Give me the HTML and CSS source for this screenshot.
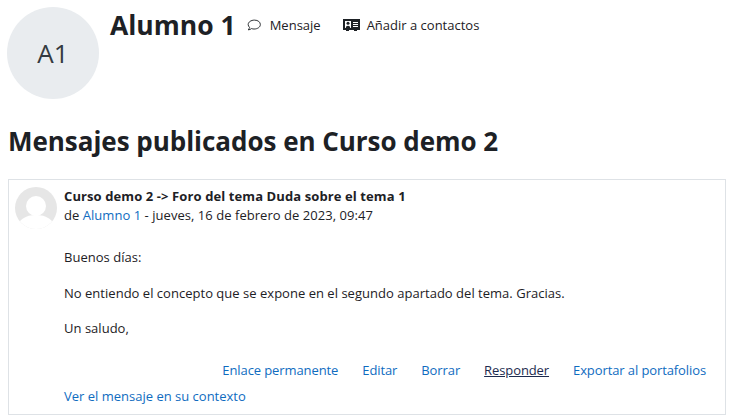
FILE: index.html
```html
<!DOCTYPE html>
<html lang="es">
<head>
<meta charset="utf-8">
<title>Mensajes publicados</title>
<link rel="stylesheet" href="styles.css">
</head>
<body>
<header class="profile">
  <div class="avatar">A1</div>
  <h1 class="name">Alumno 1</h1>
  <a class="action action-msg">
    <svg class="icon" viewBox="0 0 16 14" width="15" height="13"><path d="M8 1.2C4.2 1.2 1.2 3.3 1.2 6c0 1.200.6 2.200 1.500 3-.2.9-.8 1.800-1.400 2.700 1.300-.1 2.600-.6 3.500-1.400 1 .4 1.900.5 2.700.5 3.800 0 6.800-2.100 6.800-4.800S11.800 1.200 8 1.200z" fill="none" stroke="#1d2125" stroke-width="1"/></svg>
    Mensaje</a>
  <a class="action">
    <svg class="icon" viewBox="0 0 17 14" width="17" height="14"><path fill-rule="evenodd" fill="#1d2125" d="M0 1h17v11h-3v1h-3v-1H6v1H3v-1H0zM2 3v7h6V3zm8 1v1h5V4zm0 2v1h5V6zm0 2v1h5V8z"/><circle cx="5" cy="5.200" r="1.500" fill="#1d2125"/><path fill="#1d2125" d="M2.800 10c0-1.500 1-2.300 2.200-2.300S7.200 8.500 7.200 10z"/></svg>
    Añadir a contactos</a>
</header>
<h2 class="section-title">Mensajes publicados en Curso demo 2</h2>
<article class="post">
  <div class="post-head">
    <svg class="user-pic" viewBox="0 0 42 42" width="42" height="42">
      <defs><clipPath id="c"><circle cx="21" cy="21" r="21"/></clipPath></defs>
      <circle cx="21" cy="21" r="21" fill="#e6e6e6"/>
      <g clip-path="url(#c)" fill="#fff"><circle cx="21" cy="19" r="10"/><path d="M2 44c0-11 8-16 19-16s19 5 19 16z"/></g>
    </svg>
    <div class="post-meta">
      <div class="post-subject">Curso demo 2 -&gt; Foro del tema Duda sobre el tema 1</div>
      <div class="post-by">de <a class="link">Alumno 1</a> - jueves, 16 de febrero de 2023, 09:47</div>
    </div>
  </div>
  <div class="post-body">
    <p>Buenos días:</p>
    <p>No entiendo el concepto que se expone en el segundo apartado del tema. Gracias.</p>
    <p>Un saludo,</p>
  </div>
  <nav class="commands">
    <a class="link">Enlace permanente</a>
    <a class="link">Editar</a>
    <a class="link">Borrar</a>
    <a class="reply">Responder</a>
    <a class="link">Exportar al portafolios</a>
  </nav>
  <a class="link context">Ver el mensaje en su contexto</a>
</article>
</body>
</html>
```
FILE: styles.css
```css
html, body { margin: 0; padding: 0; }
body {
  background: #fff;
  color: #1d2125;
  font-family: "Open Sans", "Noto Sans", sans-serif;
  font-size: 13px;
  line-height: 20px;
  width: 731px;
  height: 420px;
  overflow: hidden;
}
.profile {
  display: flex;
  align-items: flex-start;
  padding: 7px 0 0 7px;
  height: 107px;
  box-sizing: border-box;
}
.avatar {
  width: 92px;
  height: 92px;
  border-radius: 50%;
  background: #e9ecef;
  display: flex;
  align-items: center;
  justify-content: center;
  font-size: 26px;
  color: #343a40;
  margin-right: 11px;
  flex: none;
}
.name {
  margin: 0 11px 0 0;
  font-size: 26.5px;
  line-height: 36px;
  font-weight: 700;
}
.action {
  display: flex;
  align-items: center;
  gap: 7px;
  height: 20px;
  margin-top: 8px;
  margin-right: 22px;
}
.action-msg { gap: 8px; }
.icon { flex: none; }
.section-title {
  margin: 16px 0 0 8px;
  font-size: 26px;
  line-height: 36px;
  font-weight: 700;
  letter-spacing: -0.03px;
}
.post {
  margin: 20px 5px 0 8px;
  border: 1px solid #dee2e6;
  height: 236px;
  box-sizing: border-box;
  padding: 7px 19px 0 6px;
}
.post-head { display: flex; gap: 7px; line-height: 19px; }
.user-pic { flex: none; }
.post-subject { font-weight: 700; letter-spacing: 0.1px; }
.post-by { letter-spacing: 0.04px; }
.post-body { margin: 18px 0 0 49px; letter-spacing: 0.02px; }
.post-body p { margin: 0 0 15.5px; }
.link { color: #0f6cbf; }
.commands {
  display: flex;
  justify-content: flex-end;
  gap: 24px;
  margin-top: 22px;
  letter-spacing: -0.1px;
}
.reply { text-decoration: underline; color: #1d2b4f; }
.context {
  display: block;
  margin: 6px 0 0 49px;
}
```
